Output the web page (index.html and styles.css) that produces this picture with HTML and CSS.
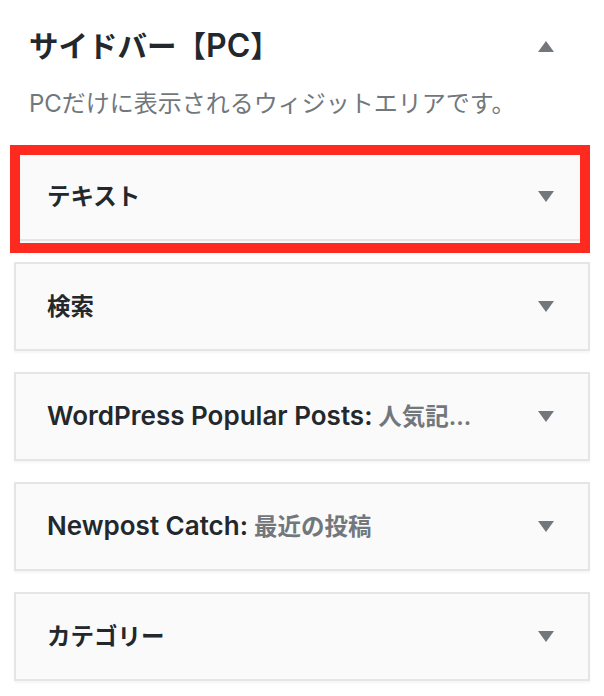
FILE: index.html
```html
<!DOCTYPE html>
<html lang="ja">
<head>
<meta charset="utf-8">
<title>ウィジェット</title>
<link rel="stylesheet" href="styles.css">
</head>
<body>
<div class="sidebar">
  <div class="sidebar-head">
    <h2 class="sidebar-name">サイドバー【<span class="latin">PC</span>】</h2>
    <span class="arrow up"></span>
  </div>
  <p class="sidebar-desc">PCだけに表示されるウィジットエリアです。</p>

  <div class="widget marked">
    <h3 class="widget-title">テキスト</h3>
    <span class="arrow"></span>
  </div>
  <div class="widget">
    <h3 class="widget-title">検索</h3>
    <span class="arrow"></span>
  </div>
  <div class="widget">
    <h3 class="widget-title"><span class="latin">WordPress Popular Posts:</span><span class="in-title"> 人気記...</span></h3>
    <span class="arrow"></span>
  </div>
  <div class="widget">
    <h3 class="widget-title"><span class="latin">Newpost Catch:</span><span class="in-title"> 最近の投稿</span></h3>
    <span class="arrow"></span>
  </div>
  <div class="widget">
    <h3 class="widget-title">カテゴリー</h3>
    <span class="arrow"></span>
  </div>
</div>
</body>
</html>
```

FILE: styles.css
```css
body {
    margin: 0;
    background: #fff;
    font-family: Inter, "Noto Sans CJK JP", sans-serif;
    color: #23282d;
}
.sidebar {
    width: 576px;
    margin-left: 14px;
    padding-top: 28px;
}
.sidebar-head {
    display: flex;
    align-items: center;
    justify-content: space-between;
    height: 36px;
    padding: 0 36px 0 15px;
}
.sidebar-name {
    margin: 0;
    font-size: 29.5px;
    font-weight: 600;
    line-height: 36px;
}
.sidebar-name .latin {
    font-size: 32px;
}
.sidebar-desc {
    margin: 24px 0 32px 15px;
    font-size: 24px;
    line-height: 32px;
    color: #72777c;
}

/* widgets */
.widget {
    display: flex;
    align-items: center;
    justify-content: space-between;
    box-sizing: border-box;
    height: 89px;
    margin-bottom: 21px;
    padding: 0 34px 0 31px;
    background: #fafafa;
    border: 2px solid #e5e5e5;
    box-shadow: 0 2px 2px rgba(0, 0, 0, 0.04);
}
.widget-title {
    margin: 0;
    font-size: 23.5px;
    font-weight: 600;
    line-height: 30px;
}
.widget-title .latin {
    font-size: 26px;
}
.in-title {
    color: #72777c;
}
.arrow {
    width: 0;
    height: 0;
    border-left: 8px solid transparent;
    border-right: 8px solid transparent;
    border-top: 11px solid #72777c;
}
.arrow.up {
    border-top: 0;
    border-bottom: 11px solid #72777c;
}

/* red marker over the first widget */
.marked {
    position: relative;
}
.marked::after {
    content: "";
    position: absolute;
    top: -9px;
    left: -6px;
    right: -2px;
    bottom: -14px;
    border: 10px solid #fe2a1f;
}
```
